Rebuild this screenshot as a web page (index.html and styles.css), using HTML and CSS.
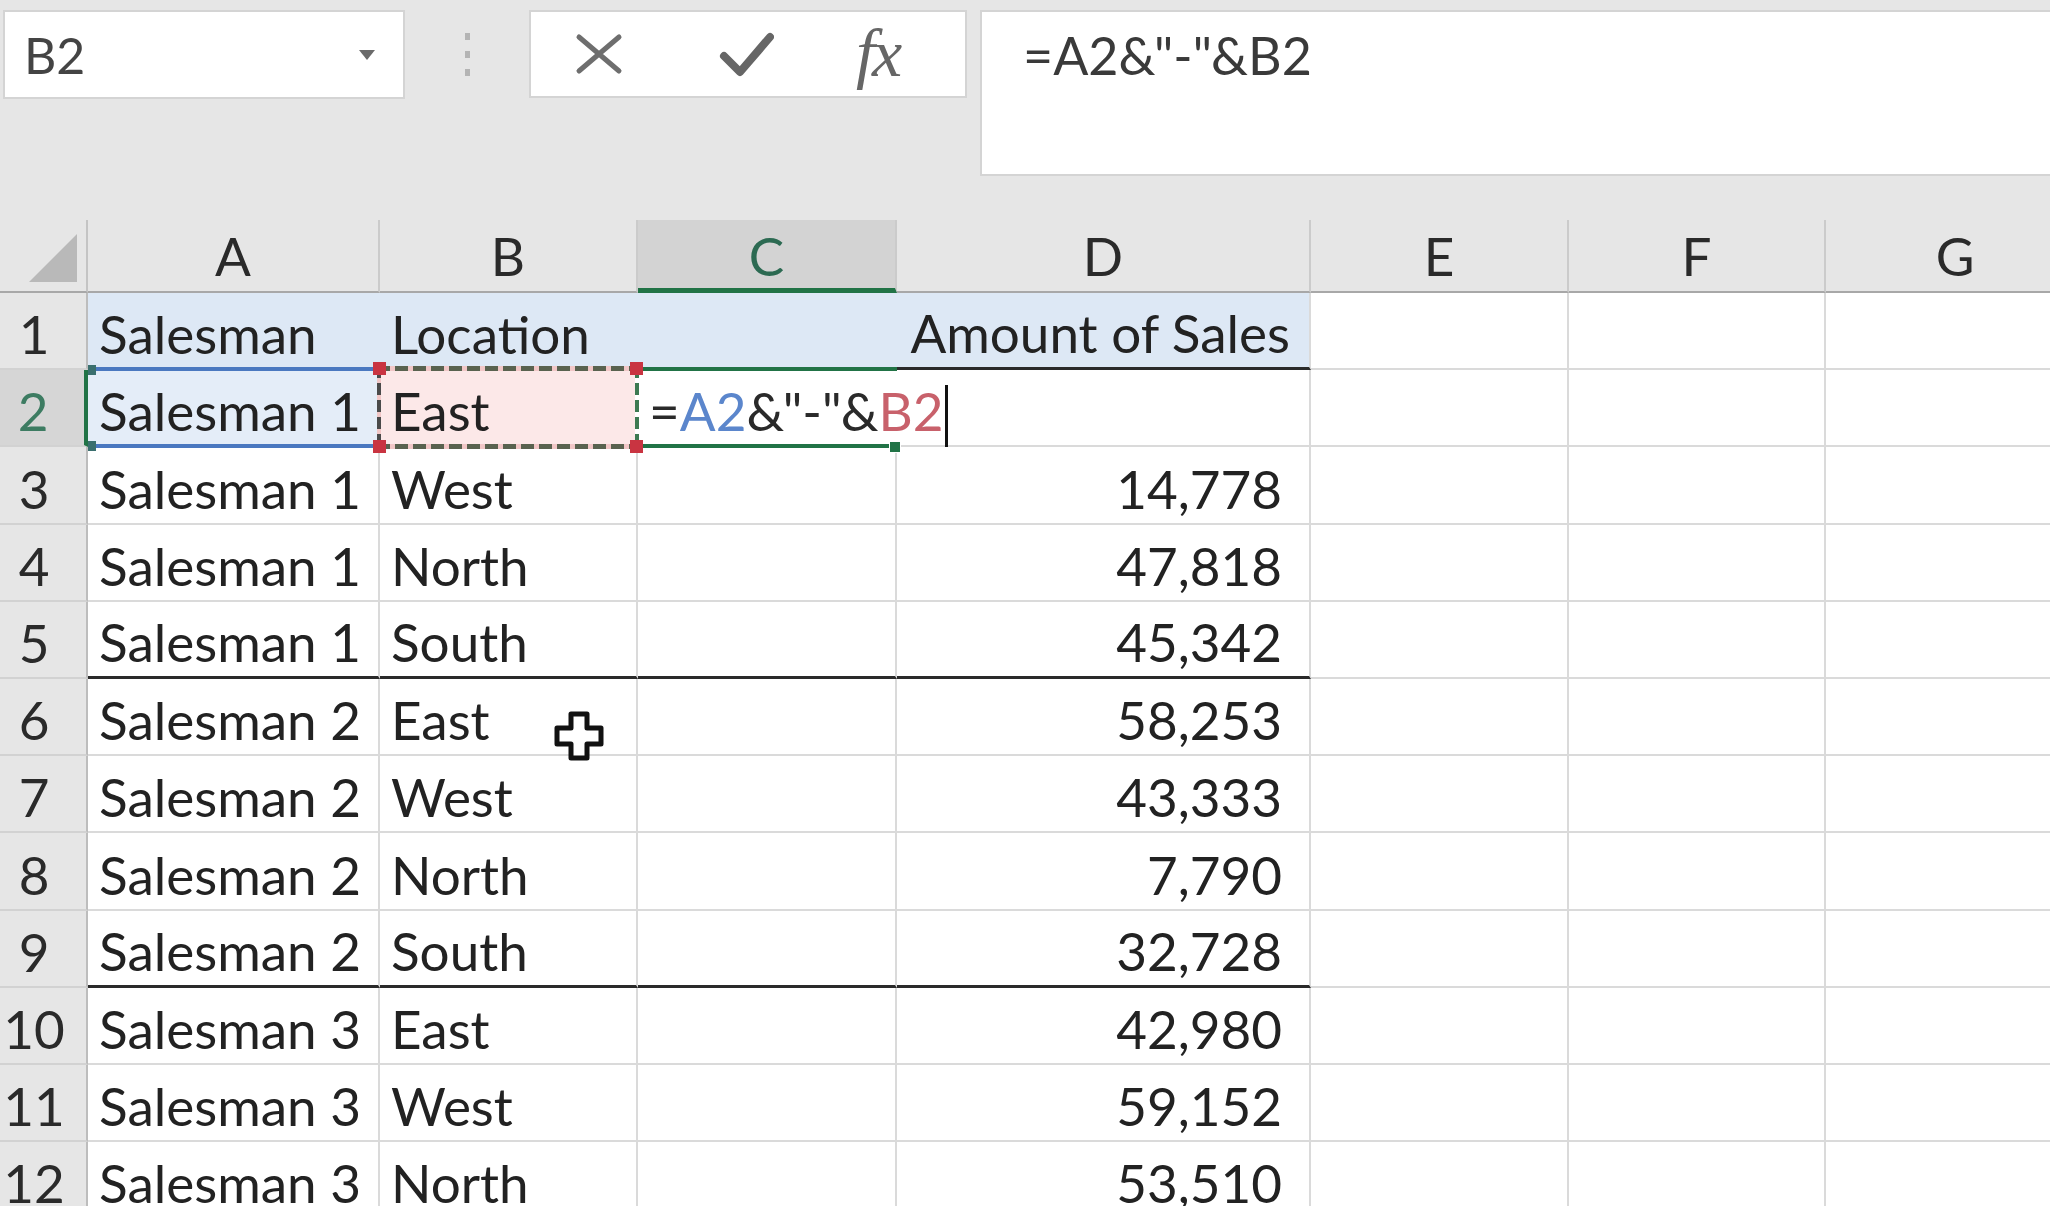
FILE: index.html
```html
<!DOCTYPE html>
<html>
<head>
<meta charset="utf-8">
<title>Excel</title>
<link rel="stylesheet" href="styles.css">
</head>
<body>
<div class="app">
  <div class="fbar">
    <div class="namebox"><span class="nb-text">B2</span><span class="nb-arrow"></span></div>
    <div class="grip"><i></i><i></i><i></i></div>
    <div class="btns">
      <svg class="ic-x" viewBox="0 0 48 42" width="48" height="42"><path d="M4 4 L44 38 M44 4 L4 38" stroke="#6e6e6e" stroke-width="5" stroke-linecap="round" fill="none"/></svg>
      <svg class="ic-ok" viewBox="0 0 55 46" width="55" height="46"><path d="M5 25 L21 41 L51 6" stroke="#666" stroke-width="8" stroke-linecap="round" stroke-linejoin="round" fill="none"/></svg>
      <span class="ic-fx">fx</span>
    </div>
    <div class="formula">=A2&amp;"-"&amp;B2</div>
  </div>

  <div class="sheet">
    <div class="corner"><span class="tri"></span></div>
    <div class="ch">A</div>
    <div class="ch">B</div>
    <div class="ch ch-act">C</div>
    <div class="ch">D</div>
    <div class="ch">E</div>
    <div class="ch">F</div>
    <div class="ch">G</div>

    <div class="rh">1</div>
    <div class="c hd">Salesman</div>
    <div class="c hd">Location</div>
    <div class="c hd"></div>
    <div class="c hd hd-last num txt-r bb">Amount of Sales</div>
    <div class="c"></div>
    <div class="c"></div>
    <div class="c"></div>

    <div class="rh rh-act">2</div>
    <div class="c a2">Salesman 1<i class="hq hq-tl"></i><i class="hq hq-bl"></i></div>
    <div class="c b2">East<i class="rq rq-tl"></i><i class="rq rq-tr"></i><i class="rq rq-bl"></i><i class="rq rq-br"></i></div>
    <div class="c c2"><span class="f-op">=</span><span class="f-a">A2</span><span class="f-op">&amp;"-"&amp;</span><span class="f-b">B2</span><span class="caret"></span><i class="fill-h"></i></div>
    <div class="c"></div>
    <div class="c"></div>
    <div class="c"></div>
    <div class="c"></div>

    <div class="rh">3</div>
    <div class="c">Salesman 1</div>
    <div class="c">West</div>
    <div class="c"></div>
    <div class="c num">14,778</div>
    <div class="c"></div>
    <div class="c"></div>
    <div class="c"></div>

    <div class="rh">4</div>
    <div class="c">Salesman 1</div>
    <div class="c">North</div>
    <div class="c"></div>
    <div class="c num">47,818</div>
    <div class="c"></div>
    <div class="c"></div>
    <div class="c"></div>

    <div class="rh">5</div>
    <div class="c bb">Salesman 1</div>
    <div class="c bb">South</div>
    <div class="c bb"></div>
    <div class="c num bb">45,342</div>
    <div class="c"></div>
    <div class="c"></div>
    <div class="c"></div>

    <div class="rh">6</div>
    <div class="c">Salesman 2</div>
    <div class="c">East</div>
    <div class="c"></div>
    <div class="c num">58,253</div>
    <div class="c"></div>
    <div class="c"></div>
    <div class="c"></div>

    <div class="rh">7</div>
    <div class="c">Salesman 2</div>
    <div class="c">West</div>
    <div class="c"></div>
    <div class="c num">43,333</div>
    <div class="c"></div>
    <div class="c"></div>
    <div class="c"></div>

    <div class="rh">8</div>
    <div class="c">Salesman 2</div>
    <div class="c">North</div>
    <div class="c"></div>
    <div class="c num">7,790</div>
    <div class="c"></div>
    <div class="c"></div>
    <div class="c"></div>

    <div class="rh">9</div>
    <div class="c bb">Salesman 2</div>
    <div class="c bb">South</div>
    <div class="c bb"></div>
    <div class="c num bb">32,728</div>
    <div class="c"></div>
    <div class="c"></div>
    <div class="c"></div>

    <div class="rh">10</div>
    <div class="c">Salesman 3</div>
    <div class="c">East</div>
    <div class="c"></div>
    <div class="c num">42,980</div>
    <div class="c"></div>
    <div class="c"></div>
    <div class="c"></div>

    <div class="rh">11</div>
    <div class="c">Salesman 3</div>
    <div class="c">West</div>
    <div class="c"></div>
    <div class="c num">59,152</div>
    <div class="c"></div>
    <div class="c"></div>
    <div class="c"></div>

    <div class="rh">12</div>
    <div class="c">Salesman 3</div>
    <div class="c">North</div>
    <div class="c"></div>
    <div class="c num">53,510</div>
    <div class="c"></div>
    <div class="c"></div>
    <div class="c"></div>
  </div>

  <svg class="mouse" viewBox="0 0 52 52" width="52" height="52"><path d="M18 4 H34 V18 H48 V34 H34 V48 H18 V34 H4 V18 H18 Z" fill="#fff" stroke="#111" stroke-width="5" stroke-linejoin="round"/></svg>
</div>
</body>
</html>
```

FILE: styles.css
```css
html, body {
  margin: 0;
  padding: 0;
}
body {
  width: 2050px;
  height: 1206px;
  overflow: hidden;
  background: #e6e6e6;
  font-family: Lato, "Open Sans", sans-serif;
  color: #222;
}
.app {
  width: 2050px;
  height: 1206px;
  overflow: hidden;
  position: relative;
}

/* formula bar */
.fbar {
  height: 220px;
  box-sizing: border-box;
  padding: 10px 0 0 3px;
  display: flex;
  align-items: flex-start;
  background: #e6e6e6;
}
.namebox {
  width: 402px;
  height: 89px;
  box-sizing: border-box;
  background: #fff;
  border: 2px solid #d4d4d4;
  display: flex;
  align-items: center;
  justify-content: space-between;
  padding: 0 28px 0 19px;
  font-size: 50px;
  color: #444;
}
.nb-arrow {
  width: 0;
  height: 0;
  border-left: 8px solid transparent;
  border-right: 8px solid transparent;
  border-top: 10px solid #6a6a6a;
}
.grip {
  width: 124px;
  height: 89px;
  display: flex;
  flex-direction: column;
  align-items: center;
  justify-content: center;
  gap: 11px;
}
.grip i {
  display: block;
  width: 5px;
  height: 7px;
  background: #b4b4b4;
}
.btns {
  width: 438px;
  height: 88px;
  box-sizing: border-box;
  background: #fff;
  border: 2px solid #d4d4d4;
  display: flex;
  align-items: center;
  padding-left: 44px;
  gap: 92px;
}
.ic-ok {
  margin-left: 4px;
}
.ic-fx {
  font-family: "Liberation Serif", serif;
  font-style: italic;
  font-size: 68px;
  color: #666;
  letter-spacing: -3px;
  line-height: 1;
  margin-top: -2px;
  margin-left: -10px;
}
.formula {
  flex: 1;
  margin-left: 13px;
  height: 166px;
  box-sizing: border-box;
  background: #fff;
  border: 2px solid #d4d4d4;
  border-right: none;
  padding: 12px 0 0 41px;
  font-size: 52px;
  line-height: 1.2;
  color: #3a3a3a;
}

/* sheet grid */
.sheet {
  display: grid;
  grid-template-columns: 88px 292px 258px 259px 414px 258px 257px 260px;
  grid-template-rows: 73px repeat(12, 77.2px);
  height: 986px;
  overflow: hidden;
  font-size: 53px;
  line-height: 1;
}
.corner {
  background: #e6e6e6;
  border-right: 2px solid #c4c4c4;
  border-bottom: 2px solid #a8a8a8;
  display: flex;
  align-items: flex-end;
  justify-content: flex-end;
  padding: 0 9px 9px 0;
}
.tri {
  width: 0;
  height: 0;
  border-left: 48px solid transparent;
  border-bottom: 48px solid #b9b9b9;
}
.ch {
  background: #e6e6e6;
  border-right: 2px solid #cbcbcb;
  border-bottom: 2px solid #a8a8a8;
  display: flex;
  align-items: center;
  justify-content: center;
  color: #2a2a2a;
}
.ch-act {
  background: #d3d3d3;
  border-bottom: 5px solid #217346;
  color: #2c6a52;
  padding-top: 3px;
}
.rh {
  background: #e6e6e6;
  border-right: 2px solid #bdbdbd;
  border-bottom: 2px solid #d2d2d2;
  display: flex;
  align-items: flex-end;
  justify-content: center;
  padding: 0 18px 8px 0;
  color: #2a2a2a;
}
.rh-act {
  background: #d6d6d6;
  border-right: 4px solid #217346;
  color: #3d7c62;
}
.c {
  background: #fff;
  border-right: 2px solid #dadada;
  border-bottom: 2px solid #dadada;
  display: flex;
  align-items: flex-end;
  padding: 0 12px 8px 11px;
  white-space: nowrap;
  min-width: 0;
}
.num {
  justify-content: flex-end;
  padding-right: 27px;
}
.txt-r {
  padding-right: 19px;
}
.hd {
  background: #dde8f5;
  border-right-color: #dde8f5;
}
.hd-last {
  border-right-color: #dadada;
}
.bb {
  border-bottom: 3px solid #2a2a2a;
}

/* A2 reference (blue) */
.a2 {
  position: relative;
  background: #e4edf8;
  border-right-color: #e4edf8;
}
.a2::before {
  content: "";
  position: absolute;
  left: 0;
  right: 0;
  top: -3px;
  bottom: -3px;
  border-top: 4px solid #4a78c0;
  border-bottom: 4px solid #4a78c0;
}
.hq {
  position: absolute;
  width: 8px;
  height: 10px;
  background: #3a6f6e;
  left: 0;
}
.hq-tl { top: -5px; }
.hq-bl { bottom: -6px; }

/* B2 reference (red, marching ants) */
.b2 {
  position: relative;
  z-index: 2;
  background: #fce8e8;
}
.b2::before {
  content: "";
  position: absolute;
  left: -3px;
  right: -3px;
  top: -4px;
  bottom: -4px;
  background:
    repeating-linear-gradient(90deg, #59624f 0 13px, #f1c7c7 13px 18px) left top / 100% 5px no-repeat,
    repeating-linear-gradient(90deg, #59624f 0 13px, #f1c7c7 13px 18px) left bottom / 100% 5px no-repeat,
    repeating-linear-gradient(180deg, #4a4a4a 0 12px, #f1c7c7 12px 17px) left top / 4px 100% no-repeat,
    repeating-linear-gradient(180deg, #3d7a52 0 12px, #ffffff 12px 17px) right top / 4px 100% no-repeat;
}
.rq {
  position: absolute;
  width: 13px;
  height: 13px;
  background: #c93441;
}
.rq-tl { left: -7px; top: -8px; }
.rq-tr { right: -7px; top: -8px; }
.rq-bl { left: -7px; bottom: -8px; }
.rq-br { right: -7px; bottom: -8px; }

/* C2 active cell in edit mode */
.c2 {
  position: relative;
  z-index: 1;
  border-right-color: #fff;
  overflow: visible;
}
.c2::before {
  content: "";
  position: absolute;
  left: 0;
  right: -2px;
  top: -3px;
  bottom: -3px;
  border-top: 4px solid #217346;
  border-bottom: 4px solid #217346;
}
.c2 span {
  flex-shrink: 0;
}
.f-op { color: #2a2a2a; }
.f-a { color: #5b86cc; }
.f-b { color: #c8616b; }
.caret {
  display: block;
  width: 3px;
  height: 62px;
  background: #111;
  margin-left: 2px;
  margin-bottom: -10px;
}
.fill-h {
  position: absolute;
  right: -6px;
  bottom: -8px;
  width: 10px;
  height: 10px;
  background: #217346;
  border: 1px solid #fff;
}

/* mouse pointer */
.mouse {
  position: absolute;
  left: 553px;
  top: 710px;
}
```
